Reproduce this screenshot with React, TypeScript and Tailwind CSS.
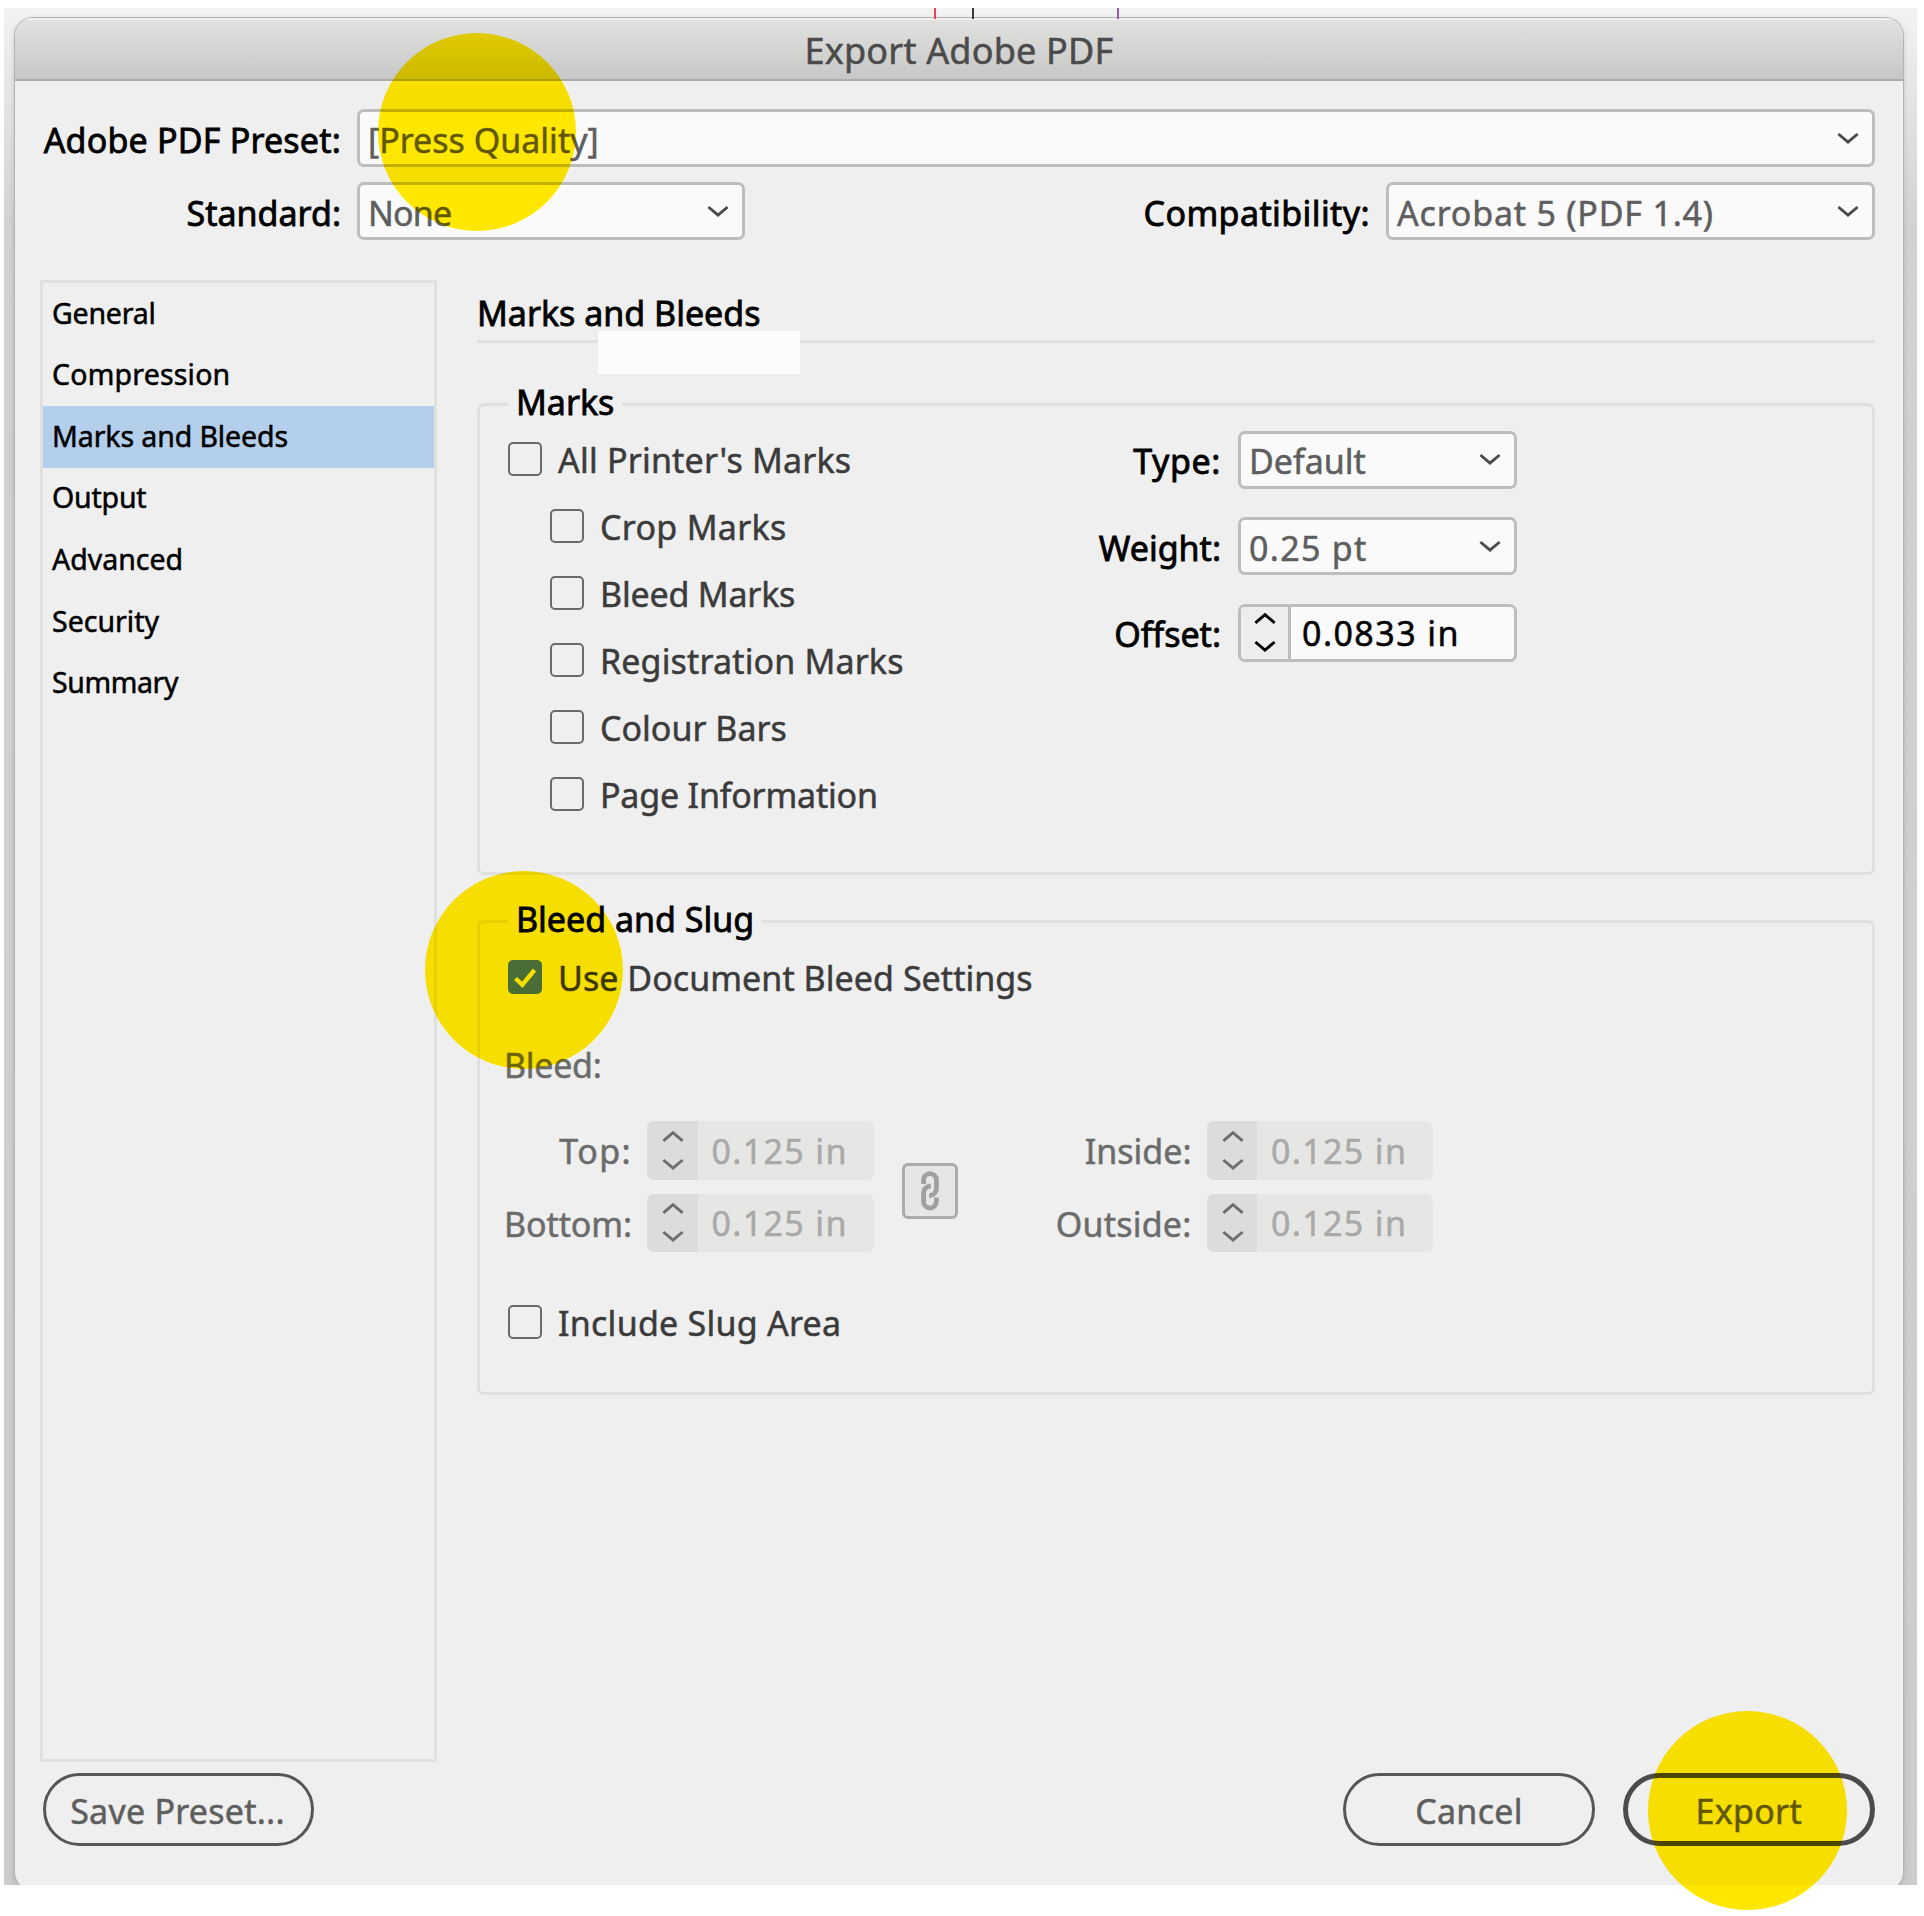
import type { ReactNode } from "react";

function Chevron({ className = "", up = false }: { className?: string; up?: boolean }) {
  return (
    <svg width="22" height="13" viewBox="0 0 22 13" fill="none" className={className}>
      <path
        d={up ? "M1.4 10.8L11 2.6l9.6 8.2" : "M1.4 2L11 10.2l9.6-8.2"}
        stroke="currentColor"
        strokeWidth="2.9"
      />
    </svg>
  );
}

function Select({ children, className = "" }: { children: ReactNode; className?: string }) {
  return (
    <div
      className={`flex h-[58px] items-center justify-between rounded-[7px] border-[3px] border-[#bdbdbd] bg-[#fafafa] pr-[13px] pl-[8px] text-[#5e5e5e] ${className}`}
    >
      <span className="pt-[3px] leading-10 whitespace-nowrap">{children}</span>
      <Chevron className="text-[#4b4b4b]" />
    </div>
  );
}

function Spinner({ value, disabled = false }: { value: string; disabled?: boolean }) {
  if (disabled) {
    return (
      <div className="flex h-[58.5px] w-[226.5px] overflow-hidden rounded-[7px] bg-[#e6e6e4]">
        <div className="flex w-[50.5px] flex-col items-center gap-[15px] bg-[#dcdcda] pt-[8.5px] pl-[2px] text-[#6e6e6e]">
          <Chevron up />
          <Chevron />
        </div>
        <span className="pt-[9.5px] pl-[14px] leading-10 tracking-[1.35px] text-[#a9a9a9]">{value}</span>
      </div>
    );
  }
  return (
    <div className="flex h-[58px] w-[279px] overflow-hidden rounded-[7px] border-[3px] border-[#bdbdbd] bg-[#fafafa] text-black">
      <div className="flex w-[50px] flex-col items-center gap-[15px] border-r-[3px] border-[#bdbdbd] bg-[#ededed] pt-[5.5px]">
        <Chevron up />
        <Chevron />
      </div>
      <span className="pt-[6px] pl-[11px] leading-10 tracking-[1.45px]">{value}</span>
    </div>
  );
}

function CheckRow({
  label,
  checked = false,
  className = "",
}: {
  label: string;
  checked?: boolean;
  className?: string;
}) {
  return (
    <div className={`flex h-[67.15px] items-center gap-[16px] text-[#3b3b3b] ${className}`}>
      {checked ? (
        <span className="z-20 size-[34px] rounded-[5px] bg-[#4a6d36]">
          <svg width="34" height="34" viewBox="0 0 34 34" fill="none">
            <path d="M7.5 18.5l6.8 6.3L26.5 10" stroke="#f5de00" strokeWidth="4.4" />
          </svg>
        </span>
      ) : (
        <span className="size-[34px] rounded-[5px] border-[2.3px] border-[#6a6a6a]" />
      )}
      <span className="pt-[2px] leading-10 whitespace-nowrap">{label}</span>
    </div>
  );
}

function Group({ title, className, children }: { title: string; className: string; children: ReactNode }) {
  return (
    <section className={`relative rounded-[7px] border-[3px] border-[#e0e0de] ${className}`}>
      <h3 className="absolute -top-[24px] left-[28px] bg-[#efefef] pr-[8px] pl-[8px] leading-10 whitespace-nowrap text-black [-webkit-text-stroke:0.8px]">
        {title}
      </h3>
      {children}
    </section>
  );
}

/** Yellow highlighter dot laid over the dialog. */
function Highlight({ className }: { className: string }) {
  return (
    <>
      <div className={`absolute size-[198.5px] rounded-full backdrop-brightness-[1.025] ${className}`} />
      <div className={`absolute size-[198.5px] rounded-full bg-[#ffe700] mix-blend-multiply ${className}`} />
    </>
  );
}

const PAGES = [
  { name: "General", tracking: "tracking-[-0.2px]" },
  { name: "Compression", tracking: "tracking-[0.2px]" },
  { name: "Marks and Bleeds", tracking: "tracking-[-0.1px]" },
  { name: "Output", tracking: "tracking-[-0.2px]" },
  { name: "Advanced", tracking: "tracking-[0px]" },
  { name: "Security", tracking: "tracking-[0px]" },
  { name: "Summary", tracking: "tracking-[-0.4px]" },
];

const MARKS = [
  { label: "Crop Marks", tracking: "tracking-[0.3px]" },
  { label: "Bleed Marks", tracking: "tracking-[-0.2px]" },
  { label: "Registration Marks", tracking: "tracking-[0.15px]" },
  { label: "Colour Bars", tracking: "tracking-[0px]" },
  { label: "Page Information", tracking: "tracking-[-0.2px]" },
];

export default function App() {
  return (
    <div className="relative isolate h-[1916px] w-[1924px] overflow-hidden bg-white pt-2 pl-1 font-['Noto_Sans',sans-serif] text-[34px] text-black [-webkit-text-stroke:0.5px]">
      <div className="relative h-[1877px] w-[1913px] overflow-hidden bg-[linear-gradient(to_bottom,#f3f3f2_0px,#e9e9e8_60px,#d2d2d2_220px,#cccccc_100%)] pt-[10px] pl-[11px]">
        <i className="absolute top-0 left-[930px] h-[11px] w-[1.5px] bg-[#f0405c]" />
        <i className="absolute top-0 left-[968px] h-[11px] w-[1.5px] bg-[#3a3a3a]" />
        <i className="absolute top-0 left-[1113px] h-[11px] w-[2px] bg-[#8d5cb5]" />

        <div className="h-[1872px] w-[1888px] overflow-hidden rounded-[18px] bg-[#efefef] shadow-[0_0_0_1px_#b4b4b4,0_2px_6px_rgba(0,0,0,0.18)]">
          <header className="flex h-[63px] justify-center border-b-2 border-[#acacac] bg-[linear-gradient(to_bottom,#e2e2e0,#c7c7c7)] pt-[10px] text-[36px] leading-[46px] tracking-[0.2px] text-[#4b4b4b] shadow-[inset_0_2px_0_#f0f0f0]">
            Export Adobe PDF
          </header>

          <div className="pr-[28px]">
            <div className="flex items-center pt-[28px]">
              <span className="w-[326px] pt-[3px] text-right leading-10 tracking-[0.2px] [-webkit-text-stroke:0.8px]">
                Adobe PDF Preset:
              </span>
              <Select className="ml-[16px] flex-1">[Press Quality]</Select>
            </div>
            <div className="flex items-center pt-[15px]">
              <span className="w-[326px] pt-[3px] text-right leading-10 [-webkit-text-stroke:0.8px]">Standard:</span>
              <Select className="ml-[16px] w-[388px] tracking-[-0.8px]">None</Select>
              <span className="ml-auto pt-[3px] leading-10 tracking-[0.4px] [-webkit-text-stroke:0.8px]">
                Compatibility:
              </span>
              <Select className="ml-[16px] w-[489px] tracking-[0.8px]">Acrobat 5 (PDF 1.4)</Select>
            </div>
          </div>

          <div className="flex pt-[40px]">
            <nav className="ml-[25px] h-[1482px] w-[397px] border-[3px] border-[#e0e0de] text-[28.5px] leading-[36px]">
              {PAGES.map(({ name, tracking }) => (
                <div
                  key={name}
                  className={`flex h-[61.6px] items-center pb-[2.5px] pl-[9px] ${tracking} ${
                    name === "Marks and Bleeds" ? "bg-[#b4cfeb]" : ""
                  }`}
                >
                  {name}
                </div>
              ))}
            </nav>

            <main className="ml-[40px] w-[1398px]">
              <div className="relative h-[63px] border-b-[3px] border-[#e0e0de] pt-[13px]">
                <h2 className="leading-10 [-webkit-text-stroke:0.8px]">Marks and Bleeds</h2>
                <div className="absolute top-[51px] left-[121px] h-[43px] w-[202px] bg-[#fcfcfc]" />
              </div>

              <Group title="Marks" className="mt-[60px] flex h-[472px]">
                <div className="w-[499px] pt-[19px]">
                  <CheckRow label="All Printer's Marks" className="pl-[28px] tracking-[0.2px]" />
                  {MARKS.map(({ label, tracking }) => (
                    <CheckRow key={label} label={label} className={`pl-[70px] ${tracking}`} />
                  ))}
                </div>
                <div className="grid auto-rows-[58px] grid-cols-[242px_279px] items-center gap-x-[17px] gap-y-[28.7px] pt-[24.5px]">
                  <span className="pt-[3px] text-right leading-10 tracking-[0.6px] [-webkit-text-stroke:0.8px]">
                    Type:
                  </span>
                  <Select>Default</Select>
                  <span className="pt-[3px] text-right leading-10 [-webkit-text-stroke:0.8px]">Weight:</span>
                  <Select className="tracking-[1.3px]">0.25 pt</Select>
                  <span className="pt-[3px] text-right leading-10 [-webkit-text-stroke:0.8px]">Offset:</span>
                  <Spinner value="0.0833 in" />
                </div>
              </Group>

              <Group title="Bleed and Slug" className="mt-[45px] h-[475px]">
                <CheckRow checked label="Use Document Bleed Settings" className="mt-[20px] pl-[28px] tracking-[0.05px]" />
                <p className="mt-[34.5px] pl-[24px] leading-10 tracking-[-0.3px] text-[#6b6b6b]">Bleed:</p>
                <div className="mt-[36.5px] flex text-[#6b6b6b]">
                  <div className="grid grid-cols-[152px_226.5px] items-center gap-x-[15px] gap-y-[14px]">
                    <span className="pt-[2px] text-right leading-10 tracking-[1.4px]">Top:</span>
                    <Spinner value="0.125 in" disabled />
                    <span className="pt-[2px] text-right leading-10 tracking-[-0.1px]">Bottom:</span>
                    <Spinner value="0.125 in" disabled />
                  </div>
                  <div className="mt-[41.5px] ml-[28px] flex size-[56px] items-center justify-center rounded-[6px] border-[3px] border-[#ababab] bg-[#e6e6e4]">
                    <svg width="18" height="40" viewBox="0 0 18 40" fill="none" stroke="#a0a0a0" strokeWidth="4.8">
                      <path d="M2.6 13V9a6.4 6.4 0 0 1 12.8 0v8.6c0 3.6-2.6 6.8-7.2 7.2" />
                      <path d="M15.4 26.6v4a6.4 6.4 0 0 1-12.8 0V22c0-3.6 2.6-6.8 7.2-7.2" />
                    </svg>
                  </div>
                  <div className="ml-[74px] grid grid-cols-[160px_226.5px] items-center gap-x-[15px] gap-y-[14px]">
                    <span className="pt-[2px] text-right leading-10">Inside:</span>
                    <Spinner value="0.125 in" disabled />
                    <span className="pt-[2px] text-right leading-10 tracking-[0.2px]">Outside:</span>
                    <Spinner value="0.125 in" disabled />
                  </div>
                </div>
                <CheckRow label="Include Slug Area" className="mt-[36.5px] pl-[28px] tracking-[0.25px]" />
              </Group>
            </main>
          </div>

          <footer className="flex pt-[11px] pr-[28px] pl-[28px] leading-10 text-[#5e5e5e]">
            <button className="h-[73px] w-[271px] rounded-full border-[3px] border-[#565656] pt-[3px] pr-[2px] tracking-[0.25px]">
              Save Preset...
            </button>
            <button className="ml-auto h-[73px] w-[252px] rounded-full border-[3px] border-[#565656] pt-[3px] tracking-[0.3px]">
              Cancel
            </button>
            <button className="ml-[27.5px] h-[73px] w-[252.5px] rounded-full border-[5.5px] border-[#4b4b4b] pt-[3px] tracking-[0.3px]">
              Export
            </button>
          </footer>
        </div>
      </div>

      <Highlight className="top-[32.5px] left-[377.5px]" />
      <Highlight className="top-[870.5px] left-[424.5px]" />
      <Highlight className="top-[1711px] left-[1648px]" />
    </div>
  );
}
